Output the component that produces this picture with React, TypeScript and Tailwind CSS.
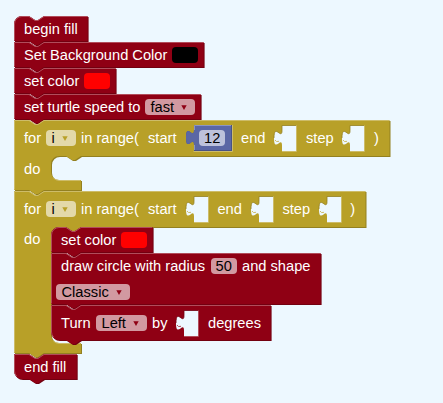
import type { ReactNode } from "react";

type Tone = { main: string; dark: string; light: string };

const RED: Tone = { main: "#8f0014", dark: "#720010", light: "#b14d5b" };
const GOLD: Tone = { main: "#b8a028", dark: "#938020", light: "#cdbc69" };
const BLUE: Tone = { main: "#5b67a5", dark: "#495284", light: "#8c95c0" };

const NOTCH = "l6,4 3,0 6,-4";
const NUB = "l-6,4 -3,0 -6,-4";
const TAB = "v5 c0,10 -8,-8 -8,7.5 s8,-2.5 8,7.5";

type ShapeProps = {
  w: number;
  h: number;
  tone: Tone;
  roundTop?: boolean;
  roundBottom?: boolean;
  mouth?: { top: number; height: number };
};

/* Outline of a stackable block, with its bevel edges */
function Shape({ w, h, tone, roundTop, roundBottom, mouth }: ShapeProps) {
  const start = roundTop ? "M0,8 A8,8 0 0,1 8,0 H15" : "M0,0 H15";
  const side = mouth
    ? `V${mouth.top} H67 ${NUB} h-7 a8,8 0 0,0 -8,8 v${mouth.height - 16} a8,8 0 0,0 8,8 H67 V${h}`
    : `V${h}`;
  const end = roundBottom ? "H8 a8,8 0 0,1 -8,-8 Z" : "H0 Z";
  const body = `${start} ${NOTCH} H${w} ${side} H30 ${NUB} ${end}`;
  const edgeStart = roundBottom ? `M2.7,${h - 2.8} A7.5,7.5 0 0,1 .5,${h - 8}` : `M.5,${h - 0.5}`;
  const edge = `${edgeStart} ${roundTop ? "V8 A7.5,7.5 0 0,1 8,.5" : "V.5"} H15 ${NOTCH} H${w - 0.5}`;
  const mouthEdge = mouth
    ? `M39.4,${mouth.top + mouth.height - 2} A8.5,8.5 0 0,0 45,${mouth.top + mouth.height + 0.5} H66.5`
    : "";
  return (
    <svg className="pointer-events-none absolute left-0 top-0 overflow-visible" width={w} height={h}>
      <path d={body} fill={tone.dark} transform="translate(1 1)" />
      <path d={body} fill={tone.main} />
      <path d={`${edge} ${mouthEdge}`} fill="none" stroke={tone.light} strokeWidth="1" />
    </svg>
  );
}

function Block({ className, children, ...shape }: ShapeProps & { className: string; children: ReactNode }) {
  return (
    <div className={`relative shrink-0 ${className}`}>
      <Shape {...shape} />
      <div className="relative">{children}</div>
    </div>
  );
}

function Row({ className = "", children }: { className?: string; children: ReactNode }) {
  return <div className={`flex items-start whitespace-nowrap pl-2.5 ${className}`}>{children}</div>;
}

function Label({ className = "", children }: { className?: string; children: ReactNode }) {
  return <span className={`block h-4 shrink-0 text-white ${className}`}>{children}</span>;
}

function Color({ className }: { className: string }) {
  return <span className={`block h-4 w-[26px] shrink-0 rounded ${className}`} />;
}

function Value({ className = "", children }: { className?: string; children: ReactNode }) {
  return (
    <span className={`block h-4 w-[26px] shrink-0 rounded bg-white/60 pl-[5px] text-black ${className}`}>
      {children}
    </span>
  );
}

function Dropdown({ className, tone, children }: { className: string; tone: Tone; children: ReactNode }) {
  return (
    <span className={`flex h-4 shrink-0 items-center justify-between rounded bg-white/60 pl-[5.5px] pr-2 text-black ${className}`}>
      {children}
      <svg width="6" height="5" viewBox="0 0 6 5">
        <path d="M.3,.3 H5.7 L3,5 Z" fill={tone.main} />
      </svg>
    </span>
  );
}

/* Empty input: a cut-out with a puzzle tab on its left */
function Socket({ tone, className = "" }: { tone: Tone; className?: string }) {
  return (
    <svg className={`-mt-[5px] block h-[26px] w-[15px] shrink-0 overflow-visible ${className}`}>
      <path d={`M0,.5 ${TAB} V26 H14 V.5 Z`} fill="#edf8ff" />
      <path d="M14.5,.5 V26.5 H0 M-7,15 Q-6,17.5 -3,16.3" fill="none" stroke={tone.light} />
      <path d="M14,.5 H0 V5.5 c0,10 -8,-8 -8,7.5" fill="none" stroke={tone.dark} strokeOpacity=".8" />
    </svg>
  );
}

function NumberBlock() {
  return (
    <div className="relative -mt-[5px] h-[26px] w-[38px] shrink-0">
      <svg className="absolute left-0 top-0 h-[26px] w-[38px] overflow-visible">
        <path d="M-.5,26.5 H38.5 V0" fill="none" stroke={GOLD.light} />
        <path d={`M0,0 ${TAB} V26 H38 V0 Z`} fill={BLUE.dark} />
        <path d={`M0,0 ${TAB} V25 H37 V0 Z`} fill={BLUE.main} />
        <path d="M.5,25 V20 M.5,5 V.5 H37" fill="none" stroke={BLUE.light} />
      </svg>
      <Value className="relative ml-[5px] translate-y-[5px]">12</Value>
    </div>
  );
}

function SetColor({ roundTop }: { roundTop?: boolean }) {
  return (
    <Block className="h-[26px] w-[102px]" w={101.6} h={25} tone={RED} roundTop={roundTop}>
      <Row className="pt-[5px]">
        <Label className="w-[60px]">set color</Label>
        <Color className="bg-[#ff0000]" />
      </Row>
    </Block>
  );
}

function RangeStart() {
  return (
    <>
      <Label className="w-[22px]">for</Label>
      <Dropdown className="w-[29.5px]" tone={GOLD}>i</Dropdown>
      <Label className="ml-[5.5px] w-[67px]">in range(</Label>
      <Label className="w-[46px]">start</Label>
    </>
  );
}

export default function App() {
  return (
    <main className="flex h-[403px] w-[443px] flex-col items-start overflow-hidden bg-[#edf8ff] pl-3.5 pt-4 font-['Liberation_Sans',Arial,sans-serif] text-[14.667px] leading-4">
      <Block className="h-[26px] w-[74px]" w={73.6} h={25} tone={RED} roundTop>
        <Row className="pt-[5px]"><Label>begin fill</Label></Row>
      </Block>
      <Block className="h-[26px] w-[190px]" w={189.6} h={25} tone={RED}>
        <Row className="pt-[5px]">
          <Label className="w-[148px]">Set Background Color</Label>
          <Color className="bg-black" />
        </Row>
      </Block>
      <SetColor />
      <Block className="h-[26px] w-[187px]" w={186.6} h={25} tone={RED}>
        <Row className="pt-[5px]">
          <Label className="w-[121px]">set turtle speed to</Label>
          <Dropdown className="w-[50px]" tone={RED}>fast</Dropdown>
        </Row>
      </Block>
      <Block className="h-[71px] w-[376px]" w={375.5} h={70} tone={GOLD} mouth={{ top: 36, height: 24 }}>
        <Row className="h-[41px] pt-2.5">
          <RangeStart />
          <NumberBlock />
          <Label className="ml-[9px] w-[41px]">end</Label>
          <Socket tone={GOLD} />
          <Label className="ml-[9px] w-11">step</Label>
          <Socket tone={GOLD} />
          <Label className="ml-[9px]">)</Label>
        </Row>
        <Row><Label>do</Label></Row>
      </Block>
      <Block className="h-[163px] w-[352px]" w={351.5} h={162} tone={GOLD} mouth={{ top: 36, height: 116 }}>
        <Row className="h-9 pt-2.5">
          <RangeStart />
          <Socket tone={GOLD} />
          <Label className="ml-[8.4px] w-[41.6px]">end</Label>
          <Socket tone={GOLD} />
          <Label className="ml-[8.4px] w-[44.6px]">step</Label>
          <Socket tone={GOLD} />
          <Label className="ml-[8.4px]">)</Label>
        </Row>
        <Row>
          <Label className="mt-1 w-[27px]">do</Label>
          <div className="flex flex-col items-start">
            <SetColor roundTop />
            <Block className="h-[52px] w-[270px]" w={269.6} h={51} tone={RED}>
              <Row className="pt-[5px]">
                <Label className="w-[149.5px]">draw circle with radius</Label>
                <Value>50</Value>
                <Label className="ml-[5.5px]">and shape</Label>
              </Row>
              <Row className="-ml-[5px] pt-2.5">
                <Dropdown className="w-[73.5px]" tone={RED}>Classic</Dropdown>
              </Row>
            </Block>
            <Block className="h-9 w-[220px]" w={219.6} h={35} tone={RED} roundBottom>
              <Row className="pt-2.5">
                <Label className="w-[35px]">Turn</Label>
                <Dropdown className="w-[50.5px]" tone={RED}>Left</Dropdown>
                <Label className="ml-[5.5px] w-8">by</Label>
                <Socket tone={RED} />
                <Label className="ml-[9px]">degrees</Label>
              </Row>
            </Block>
          </div>
        </Row>
      </Block>
      <Block className="h-[26px] w-[63px]" w={62.7} h={25} tone={RED} roundBottom>
        <Row className="pt-[5px]"><Label>end fill</Label></Row>
      </Block>
    </main>
  );
}
